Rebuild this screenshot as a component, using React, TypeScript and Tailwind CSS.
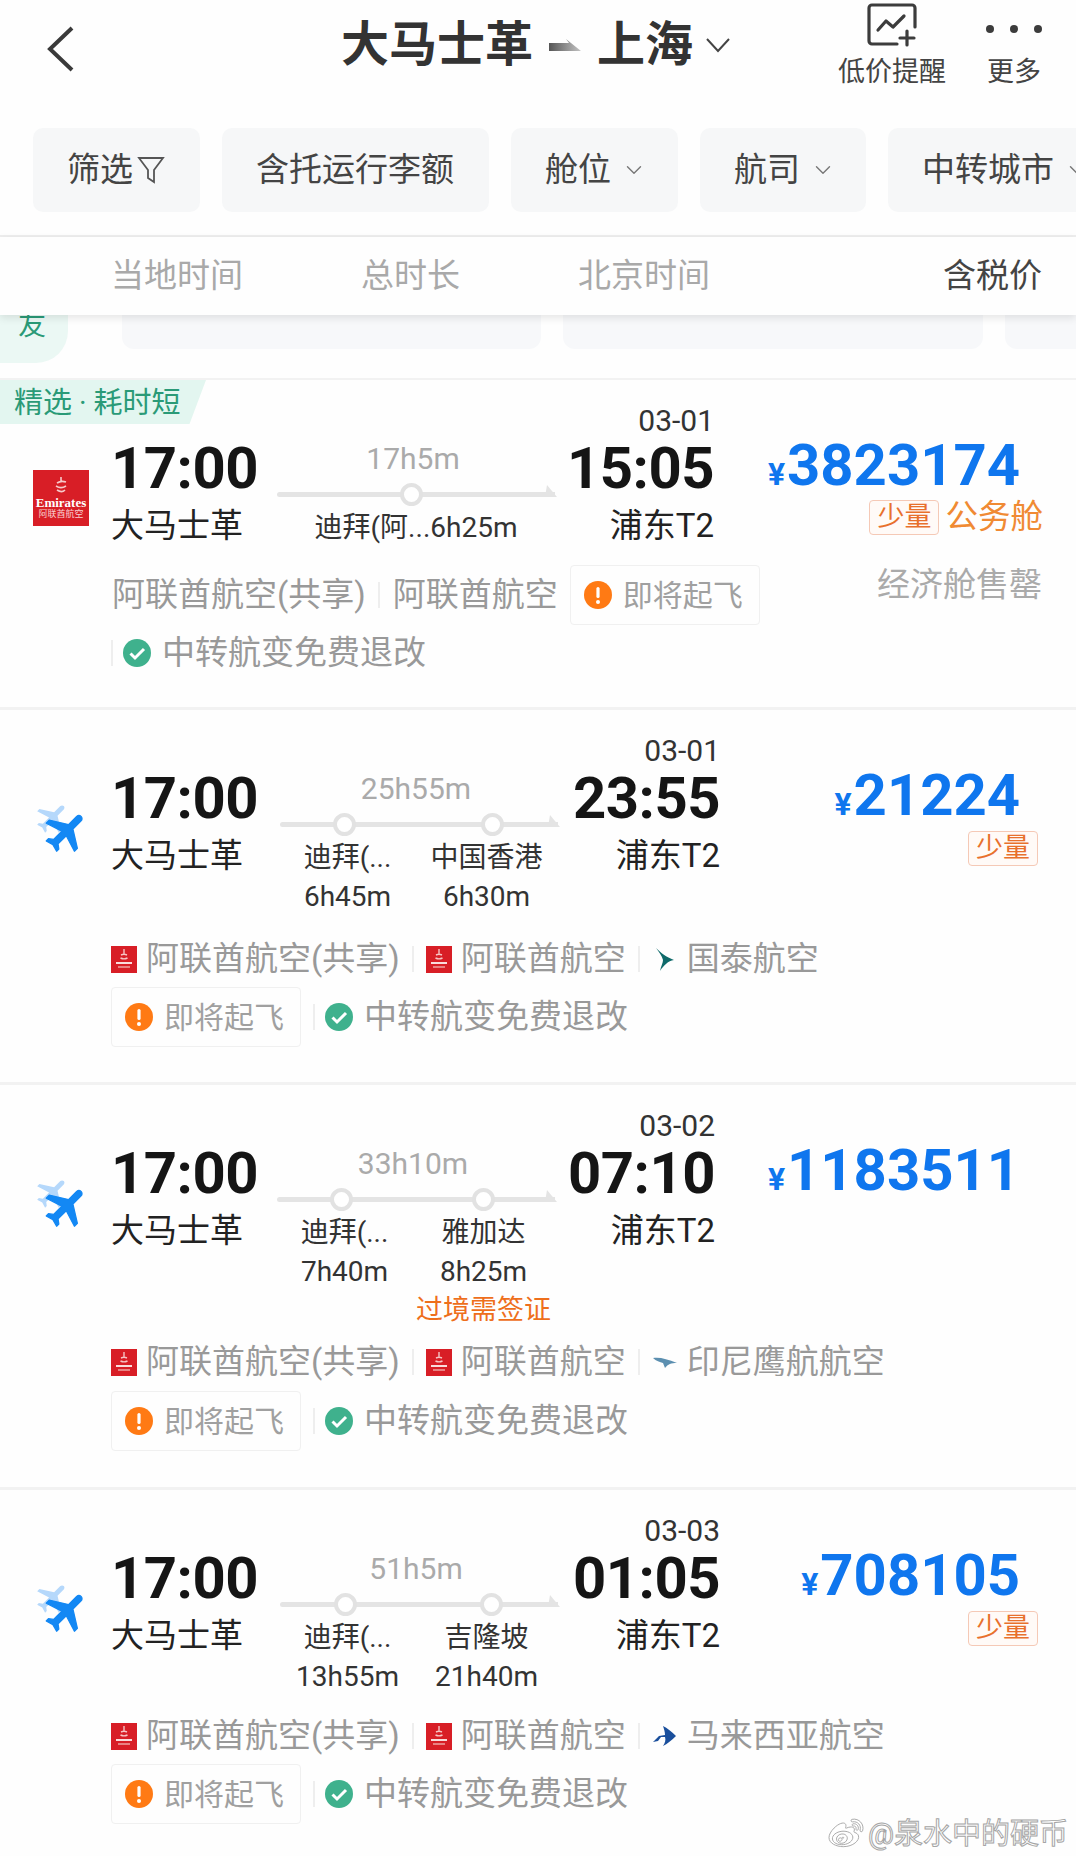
import React from 'react';
import { ChevronDown } from 'lucide-react';
import { FaWeibo } from 'react-icons/fa';

type Airline = { logo: 'emirates' | 'cathay' | 'garuda' | 'malaysia' | null; name: string };
type Stop = { city: string; stay: string };
type Flight = {
  arriveDate: string;
  arrive: string;
  arriveW: string;
  departW: string;
  duration: string;
  dots: number[];
  stops: Stop[];
  singleStop?: string;
  visa?: boolean;
  price: string;
  few?: boolean;
  mainH: string;
  tail: string;
  airlines: Airline[];
};

const font = 'font-["Roboto","Noto_Sans_CJK_SC",sans-serif]';
const planePath = 'M21 16v-2l-8-5V3.5c0-.83-.67-1.5-1.5-1.5S10 2.67 10 3.5V9l-8 5v2l8-2.5V19l-2 1.5V22l3.5-1 3.5 1v-1.5L13 19v-5.5l8 2.5z';

const EmiratesLogo = ({ big }: { big?: boolean }) => {
  if (big) {
    return <div className="w-[56px] h-[56px] bg-[#d81e26] flex flex-col items-center justify-end pb-[6px] text-white">
        <svg viewBox="0 0 20 18" className="w-[20px] h-[18px] mb-[2px]" fill="none" stroke="#f6c9c9" strokeWidth="1.6">
          <path d="M10 1v4M6 7c3-2 6-2 9-1M5 10c3 2 7 2 10 0M6 14c3 2 6 2 8 0" />
        </svg>
        <span className="font-['Liberation_Serif',serif] text-[13px] leading-[13px] font-bold">Emirates</span>
        <span className="text-[9px] leading-[11px] text-[#f8d0d0]">阿联酋航空</span>
      </div>;
  }
  return <svg viewBox="0 0 26 27" className="w-[26px] h-[27px] shrink-0">
      <rect width="26" height="27" fill="#d81e26" />
      <path d="M13 3v5M10 9c2-1 4-1 6 0M9.5 12c2 1 5 1 7 0" fill="none" stroke="#f6c4c4" strokeWidth="1.4" />
      <path d="M5 17h16" stroke="#f9dcdc" strokeWidth="2" />
      <path d="M7 21h12" stroke="#ee9a9a" strokeWidth="1.6" />
    </svg>;
};

const CathayLogo = () => <svg viewBox="0 0 26 27" className="w-[26px] h-[27px] shrink-0">
    <path d="M4 2c5 5 10 9 18 12-6 1-10 5-14 11 1-5 3-8 3-11C10 10 7 6 4 2z" fill="#0f6a6a" />
  </svg>;

const GarudaLogo = () => <svg viewBox="0 0 26 27" className="w-[26px] h-[27px] shrink-0">
    <path d="M1 9c7-1 14 1 24 5-6 0-9 1-12 5l-2-5C8 13 4 12 1 9z" fill="#5c8fb0" />
  </svg>;

const MalaysiaLogo = () => <svg viewBox="0 0 26 27" className="w-[26px] h-[27px] shrink-0">
    <path d="M11 3c4 2 9 6 13 10-4 4-9 8-13 10 2-3 3-6 2-9H9l-3 4-5 1 6-6 6-1c0-3-1-6-2-9z" fill="#1a4f9c" />
  </svg>;

const AirlineLogo = ({ logo }: { logo: Airline['logo'] }) => {
  if (logo === 'emirates') return <EmiratesLogo />;
  if (logo === 'cathay') return <CathayLogo />;
  if (logo === 'garuda') return <GarudaLogo />;
  if (logo === 'malaysia') return <MalaysiaLogo />;
  return null;
};

const PlaneIcon = () => <svg viewBox="0 0 60 60" className="w-[60px] h-[60px] overflow-visible">
    <g transform="translate(-2.2 -1.2) scale(1.6) rotate(45 12 12)" fill="#b5d8fb">
      <path d={planePath} />
    </g>
    <g transform="translate(5.8 6.8) scale(2.1) rotate(45 12 12)" fill="#1388f4" stroke="#1388f4" strokeWidth="0.6" strokeLinejoin="round">
      <path d={planePath} />
    </g>
  </svg>;

const WarnIcon = () => <svg viewBox="0 0 28 28" className="w-[28px] h-[28px] shrink-0">
    <circle cx="14" cy="14" r="14" fill="#ff7a14" />
    <rect x="12.4" y="6" width="3.2" height="11" rx="1.6" fill="#fff" />
    <circle cx="14" cy="21" r="2" fill="#fff" />
  </svg>;

const CheckIcon = () => <svg viewBox="0 0 28 28" className="w-[28px] h-[28px] shrink-0">
    <circle cx="14" cy="14" r="14" fill="#3fb18d" />
    <path d="M7.5 14.5l4.5 4.5 9-9" fill="none" stroke="#fff" strokeWidth="3" />
  </svg>;

const WarnTag = () => <div className="w-[190px] h-[60px] border border-[#f0f0f0] rounded-[4px] flex items-center pl-[13px] gap-[11px]">
    <WarnIcon />
    <span className="text-[30px] text-[#a0a0a0]">即将起飞</span>
  </div>;

const FreeChange = ({ withGap }: { withGap?: boolean }) => <div className="flex items-center">
    <div className={`w-[2px] h-[26px] bg-[#eeeeee] ${withGap ? 'ml-[12px]' : ''} mr-[10px]`}></div>
    <CheckIcon />
    <span className="text-[33px] text-[#999999] ml-[11px]">中转航变免费退改</span>
  </div>;

const FewTag = () => <div className="w-[70px] h-[35px] border border-[#f5c9b6] rounded-[4px] text-[#e8702c] text-[27px] leading-[33px] text-center bg-[#fffaf7]">少量</div>;

const AirlineRow = ({ airlines, tag }: { airlines: Airline[]; tag?: boolean }) => <div className="h-[58px] flex items-center pl-[111px]">
    {airlines.map((a, i) => <React.Fragment key={i}>
        {i > 0 && <div className="w-[2px] h-[26px] bg-[#eeeeee] mx-[12px]"></div>}
        <AirlineLogo logo={a.logo} />
        <span className={`text-[33px] text-[#999999] whitespace-nowrap ${a.logo ? 'ml-[9px]' : 'ml-[1px]'}`}>{a.name}</span>
      </React.Fragment>)}
    {tag && <div className="ml-[12px]"><WarnTag /></div>}
  </div>;

const Route = ({ f }: { f: Flight }) => <div className="w-[278px] shrink-0 pt-[39px]">
    <div className="h-[28px] leading-[28px] text-center text-[30px] text-[#aaaaaa] pr-[6px]">{f.duration}</div>
    <div className="h-[42px] flex items-center">
      <div className="relative w-full h-[5px] bg-[#e4e4e4] rounded-l-full">
        {f.dots.map(d => <div key={d} className="absolute top-[-9px] w-[23px] h-[23px] rounded-full border-[4px] border-[#e2e2e2] bg-white" style={{ left: d - 11 }}></div>)}
        <svg viewBox="0 0 12 12" className="absolute right-[-2px] bottom-0 w-[12px] h-[12px]">
          <path d="M2 0l10 12H0z" fill="#e4e4e4" />
        </svg>
      </div>
    </div>
    {f.singleStop ? <div className="h-[26px] leading-[26px] text-center text-[28px] text-[#333333] whitespace-nowrap">{f.singleStop}</div> : <div className="grid grid-cols-[139px_139px] -ml-[2px]">
        {f.stops.map(s => <div key={s.city} className="flex flex-col items-center text-[28px] text-[#333333]">
            <div className="h-[26px] leading-[26px] whitespace-nowrap">{s.city}</div>
            <div className="mt-[6px] h-[40px] leading-[40px] whitespace-nowrap">{s.stay}</div>
            {f.visa && s.city === '雅加达' && <div className="h-[36px] leading-[36px] text-[#ee6f1c] text-[27px] whitespace-nowrap">过境需签证</div>}
          </div>)}
      </div>}
  </div>;

const Time = ({ value }: { value: string }) => <div className="h-[60px] leading-[60px] text-[58px] font-bold text-[#151515] tracking-[-0.5px]">{value}</div>;

const Card = ({ f, first }: { f: Flight; first?: boolean }) => <div className="relative border-b-[3px] border-[#f2f2f2]">
    {first && <div className="w-[206px] h-[44px] -mb-[44px] bg-[#e3f6f0] [clip-path:polygon(0_0,100%_0,92%_100%,0_100%)] text-[#2a9a77] text-[29px] leading-[47px] pl-[14px] whitespace-nowrap">精选<span className="mx-[7px]">·</span>耗时短</div>}
    <div className={`flex pt-[26px] ${f.mainH}`}>
      <div className="w-[111px] shrink-0 pt-[62px] pl-[33px]">
        {first ? <div className="pt-[2px]"><EmiratesLogo big /></div> : <div className="ml-[3px] mt-[2px]"><PlaneIcon /></div>}
      </div>
      <div className={`${f.departW} shrink-0 pt-[32px]`}>
        <Time value="17:00" />
        <div className="h-[56px] leading-[56px] text-[33px] text-[#222222]">大马士革</div>
      </div>
      <Route f={f} />
      <div className={`${f.arriveW} shrink-0 flex flex-col items-end`}>
        <div className="h-[32px] leading-[30px] text-[30px] text-[#333333]">{f.arriveDate}</div>
        <Time value={f.arrive} />
        <div className="h-[56px] leading-[56px] text-[33px] text-[#222222] whitespace-nowrap">浦东T2</div>
      </div>
      <div className="flex-1 flex flex-col items-end pt-[30px]">
        <div className="h-[58px] leading-[58px] pr-[56px] text-[#0f76ee] font-bold text-[58px] whitespace-nowrap">
          <span className="text-[32px] mr-[2px]">¥</span>{f.price}
        </div>
        {first ? <>
            <div className="flex items-center pr-[33px] mt-[6px] gap-[6px]">
              <FewTag />
              <span className="text-[32.5px] text-[#f08a33] leading-[35px] whitespace-nowrap">公务舱</span>
            </div>
            <div className="pr-[34px] mt-[32px] h-[36px] leading-[36px] text-[33px] text-[#aaaaaa] whitespace-nowrap">经济舱售罄</div>
          </> : f.few && <div className="pr-[38px] mt-[7px]"><FewTag /></div>}
      </div>
    </div>
    <AirlineRow airlines={f.airlines} tag={first} />
    <div className={`h-[58px] flex items-center pl-[111px] ${f.tail}`}>
      {!first && <WarnTag />}
      <FreeChange withGap={!first} />
    </div>
  </div>;

const flights: Flight[] = [{
  arriveDate: '03-01', arrive: '15:05', arriveW: 'w-[159px]', departW: 'w-[166px]', duration: '17h5m', dots: [134], stops: [], singleStop: '迪拜(阿...6h25m', price: '3823174', mainH: 'h-[186px]', tail: 'mb-[25px]',
  airlines: [{ logo: null, name: '阿联酋航空(共享)' }, { logo: null, name: '阿联酋航空' }]
}, {
  arriveDate: '03-01', arrive: '23:55', arriveW: 'w-[162px]', departW: 'w-[169px]', duration: '25h55m', dots: [64, 212], stops: [{ city: '迪拜(...', stay: '6h45m' }, { city: '中国香港', stay: '6h30m' }], price: '21224', few: true, mainH: 'h-[220px]', tail: 'mb-[36px]',
  airlines: [{ logo: 'emirates', name: '阿联酋航空(共享)' }, { logo: 'emirates', name: '阿联酋航空' }, { logo: 'cathay', name: '国泰航空' }]
}, {
  arriveDate: '03-02', arrive: '07:10', arriveW: 'w-[160px]', departW: 'w-[166px]', duration: '33h10m', dots: [64, 206], stops: [{ city: '迪拜(...', stay: '7h40m' }, { city: '雅加达', stay: '8h25m' }], visa: true, price: '1183511', mainH: 'h-[248px]', tail: 'mt-[1px] mb-[37px]',
  airlines: [{ logo: 'emirates', name: '阿联酋航空(共享)' }, { logo: 'emirates', name: '阿联酋航空' }, { logo: 'garuda', name: '印尼鹰航航空' }]
}, {
  arriveDate: '03-03', arrive: '01:05', arriveW: 'w-[162px]', departW: 'w-[169px]', duration: '51h5m', dots: [65, 211], stops: [{ city: '迪拜(...', stay: '13h55m' }, { city: '吉隆坡', stay: '21h40m' }], price: '708105', few: true, mainH: 'h-[217px]', tail: 'mb-[34px]',
  airlines: [{ logo: 'emirates', name: '阿联酋航空(共享)' }, { logo: 'emirates', name: '阿联酋航空' }, { logo: 'malaysia', name: '马来西亚航空' }]
}];

const Chip = ({ w, label, chevron, funnel }: { w: string; label: string; chevron?: boolean; funnel?: boolean }) => <div className={`${w} h-[84px] shrink-0 bg-[#f6f7f8] rounded-[10px] flex items-center pl-[34px] text-[33px] text-[#444444] whitespace-nowrap`}>
    {label}
    {funnel && <svg viewBox="0 0 28 30" className="w-[28px] h-[30px] ml-[4px]" fill="none" stroke="#555555" strokeWidth="1.8">
        <path d="M2 3h24L17 15v12l-6-4v-8z" />
      </svg>}
    {chevron && <ChevronDown className="w-[26px] h-[26px] ml-[10px] text-[#777777]" strokeWidth={1.3} />}
  </div>;

const App = () => {
  return <div className={`relative w-[1076px] h-[1856px] overflow-hidden bg-[#fefefe] ${font}`}>
      <header className="h-[128px] flex items-start">
        <svg viewBox="0 0 28 46" className="w-[28px] h-[46px] ml-[46px] mt-[26px] shrink-0" fill="none" stroke="#3a3a3a" strokeWidth="4">
          <path d="M26 2L4 23l22 21" />
        </svg>
        <div className="ml-[267px] h-[90px] flex items-center text-[48px] font-bold text-[#333333] whitespace-nowrap">
          <span>大马士革</span>
          <svg viewBox="0 0 32 12" className="w-[32px] h-[12px] mx-[16px]">
            <defs>
              <linearGradient id="titleArrow" x1="0" x2="1" y1="0" y2="0">
                <stop offset="0" stopColor="#555555" />
                <stop offset="1" stopColor="#c4c4c4" />
              </linearGradient>
            </defs>
            <path d="M0 4h20l-3-4 15 12H0z" fill="url(#titleArrow)" />
          </svg>
          <span>上海</span>
          <svg viewBox="0 0 26 16" className="w-[26px] h-[16px] ml-[12px]" fill="none" stroke="#444444" strokeWidth="2">
            <path d="M2 2l11 12L24 2" />
          </svg>
        </div>
        <div className="ml-[106px] w-[110px] flex flex-col items-center shrink-0">
          <svg viewBox="0 0 50 44" className="w-[50px] h-[44px] mt-[3px]" fill="none" stroke="#3c3c3c" strokeWidth="3.2" strokeLinecap="round" strokeLinejoin="round">
            <path d="M48 24V5a3 3 0 0 0-3-3H5a3 3 0 0 0-3 3v33a3 3 0 0 0 3 3h25" />
            <path d="M11 27l8-9 7 6 11-11" />
            <path d="M40 28v14M33 35h14" />
          </svg>
          <span className="text-[27px] leading-[36px] text-[#444444] mt-[7px] whitespace-nowrap">低价提醒</span>
        </div>
        <div className="ml-[40px] w-[54px] flex flex-col items-center shrink-0">
          <div className="flex gap-[16px] mt-[25px] mb-[21px]">
            <div className="w-[8px] h-[8px] rounded-full bg-[#3c3c3c]"></div>
            <div className="w-[8px] h-[8px] rounded-full bg-[#3c3c3c]"></div>
            <div className="w-[8px] h-[8px] rounded-full bg-[#3c3c3c]"></div>
          </div>
          <span className="text-[27px] leading-[36px] text-[#444444] whitespace-nowrap">更多</span>
        </div>
      </header>

      <div className="h-[109px] flex gap-[22px] pl-[33px] overflow-hidden border-b-[2px] border-[#eeeeee]">
        <Chip w="w-[167px]" label="筛选" funnel />
        <Chip w="w-[267px]" label="含托运行李额" />
        <Chip w="w-[167px]" label="舱位" chevron />
        <Chip w="w-[166px]" label="航司" chevron />
        <Chip w="w-[230px]" label="中转城市" chevron />
      </div>

      <div className="relative z-10 h-[78px] flex items-center text-[33px] text-[#a9a9a9] shadow-[0_3px_8px_rgba(0,0,0,0.1)] bg-[#fefefe]">
        <span className="ml-[111px]">当地时间</span>
        <span className="ml-[118px]">总时长</span>
        <span className="ml-[118px]">北京时间</span>
        <span className="ml-[233px] text-[#444444]">含税价</span>
      </div>

      <div className="h-[65px] flex overflow-hidden border-b-[2px] border-[#f2f2f2]">
        <div className="w-[68px] h-[51px] shrink-0 bg-[#ebf8f4] rounded-br-[32px] pl-[18px] -mt-[3px] text-[28px] leading-[28px] text-[#2a9a77]">友</div>
        <div className="w-[419px] h-[34px] ml-[54px] shrink-0 bg-[#f7f8fa] rounded-b-[12px]"></div>
        <div className="w-[420px] h-[34px] ml-[22px] shrink-0 bg-[#f7f8fa] rounded-b-[12px]"></div>
        <div className="w-[80px] h-[34px] ml-[22px] shrink-0 bg-[#f7f8fa] rounded-bl-[12px]"></div>
      </div>

      {flights.map((f, i) => <Card key={f.arriveDate + f.arrive} f={f} first={i === 0} />)}

      <div className="absolute right-[8px] bottom-0 flex items-center text-[29px] text-white/80 [-webkit-text-stroke:1px_#a5a5a5] whitespace-nowrap">
        <FaWeibo className="w-[38px] h-[34px] mr-[3px]" stroke="#a5a5a5" strokeWidth={14} />
        @泉水中的硬币
      </div>
    </div>;
};

export default App;
